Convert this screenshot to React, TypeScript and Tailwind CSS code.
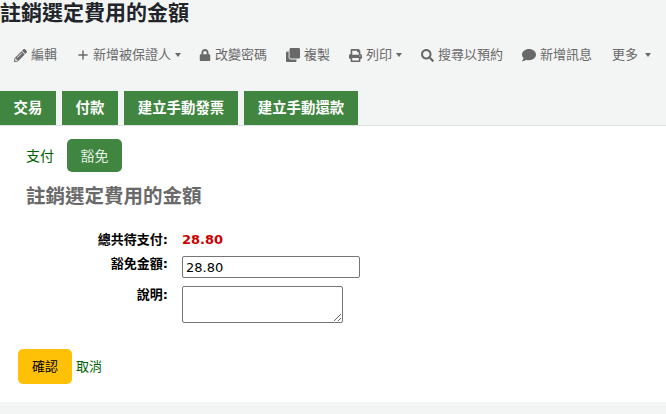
import React from "react";
import { FaClone, FaComment, FaLock, FaPencilAlt, FaPrint, FaSearch } from "react-icons/fa";
import { Plus } from "lucide-react";

const Caret = ({ className = "" }: { className?: string }) => (
  <span className={`inline-block h-0 w-0 border-x-[3.5px] border-t-[4px] border-x-transparent border-t-[#696969] ${className}`} />
);

const toolbar = [
  { icon: <FaPencilAlt size={13} />, label: "編輯", caret: false, className: "ml-[14px] w-[63px] gap-[4px]" },
  { icon: <Plus size={14} strokeWidth={2.5} className="-mx-[1px]" />, label: "新增被保證人", caret: true, className: "w-[122px] gap-[4px]" },
  { icon: <FaLock size={12} />, label: "改變密碼", caret: false, className: "w-[87px] gap-[4px]" },
  { icon: <FaClone size={14} />, label: "複製", caret: false, className: "w-[63px] gap-[4px]" },
  { icon: <FaPrint size={13} />, label: "列印", caret: true, className: "w-[72px] gap-[4px]" },
  { icon: <FaSearch size={13} />, label: "搜尋以預約", caret: false, className: "w-[101px] gap-[4px]" },
  { icon: <FaComment size={14} />, label: "新增訊息", caret: false, className: "w-[90px] gap-[4px]" },
];

const tabs = [
  { label: "交易", width: "w-[56px]" },
  { label: "付款", width: "w-[56px]" },
  { label: "建立手動發票", width: "w-[114px]" },
  { label: "建立手動還款", width: "w-[114px]" },
];

export default function App() {
  return (
    <div className="h-[414px] w-[666px] overflow-hidden bg-[#f3f4f4] font-['Noto_Sans','Noto_Sans_CJK_TC',sans-serif] text-[13px] text-[#212529]">
      <h1 className="h-[31px] whitespace-nowrap pt-[1px] text-[21px] font-bold leading-[23px] text-[#212529]">註銷選定費用的金額</h1>

      <div className="flex h-[48px] items-center text-[#696969]">
        {toolbar.map((item) => (
          <div key={item.label} className={`flex items-center whitespace-nowrap ${item.className}`}>
            {item.icon}
            <span>{item.label}</span>
            {item.caret && <Caret />}
          </div>
        ))}
        <div className="flex items-center whitespace-nowrap">
          <span>更多</span>
          <Caret className="ml-[7px]" />
        </div>
      </div>

      <div className="mt-[12px] flex h-[34px] gap-[6px]">
        {tabs.map((tab) => (
          <div key={tab.label} className={`flex items-center justify-center bg-[#408540] text-[14.4px] font-bold text-white ${tab.width}`}>
            {tab.label}
          </div>
        ))}
      </div>

      <div className="h-[277px] border-t border-[#dee2e6] bg-white pl-[18px] pt-[13px]">
        <div className="flex items-center pl-[8px] text-[14px]">
          <span className="text-[#006100]">支付</span>
          <span className="ml-[13px] flex h-[33px] w-[55px] items-center justify-center rounded-[5px] bg-[#408540] text-[#e6f0e6]">豁免</span>
        </div>

        <h2 className="mt-[11px] pl-[8px] text-[19.5px] font-bold leading-[25px] text-[#696969]">註銷選定費用的金額</h2>

        <div className="mt-[21px] font-['DejaVu_Sans','Noto_Sans_CJK_TC',sans-serif] text-[13px]">
          <div className="flex h-[21px] items-center">
            <span className="w-[150px] text-right font-bold text-black">總共待支付:</span>
            <span className="ml-[14px] text-[13px] font-bold text-[#cc0000]">28.80</span>
          </div>
          <div className="mt-[6px] flex h-[24px] items-start">
            <span className="w-[150px] text-right font-bold leading-[16px] text-black">豁免金額:</span>
            <input
              readOnly
              value="28.80"
              className="ml-[14px] h-[22px] w-[178px] rounded-[2px] border border-[#767676] bg-white px-[3px] text-[13px] text-black"
            />
          </div>
          <div className="mt-[6px] flex items-start">
            <span className="w-[150px] pt-[1px] text-right font-bold leading-[16px] text-black">說明:</span>
            <textarea className="ml-[14px] h-[37px] w-[161px] rounded-[2px] border border-[#767676] bg-white" />
          </div>
        </div>

        <div className="mt-[26px] flex items-center">
          <span className="flex h-[35px] w-[54px] items-center justify-center rounded-[5px] bg-[#ffc107] text-[13px] text-black">確認</span>
          <span className="ml-[4px] text-[13px] text-[#006100]">取消</span>
        </div>
      </div>
    </div>
  );
}
